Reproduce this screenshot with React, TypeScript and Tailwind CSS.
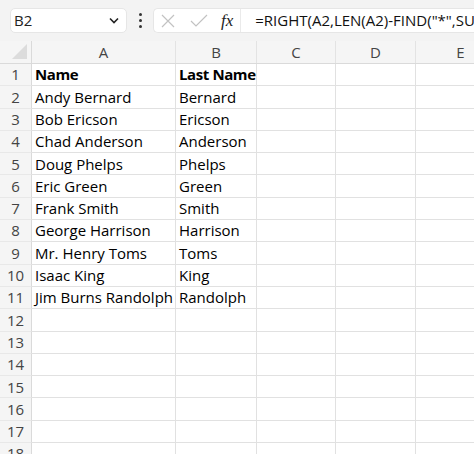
import React from "react";

const data: [string, string][] = [
  ["Name", "Last Name"],
  ["Andy Bernard", "Bernard"],
  ["Bob Ericson", "Ericson"],
  ["Chad Anderson", "Anderson"],
  ["Doug Phelps", "Phelps"],
  ["Eric Green", "Green"],
  ["Frank Smith", "Smith"],
  ["George Harrison", "Harrison"],
  ["Mr. Henry Toms", "Toms"],
  ["Isaac King", "King"],
  ["Jim Burns Randolph", "Randolph"],
];

const rows = Array.from({ length: 18 }, (_, i) => i + 1);

export default function App() {
  return (
    <div
      className="w-[474px] h-[454px] overflow-hidden bg-white text-black"
      style={{ fontFamily: '"Open Sans", "Noto Sans", sans-serif' }}
    >
      {/* Toolbar */}
      <div className="h-[41px] bg-[#f3f3f3] flex items-center pl-[10px] gap-[6px]">
        <div className="w-[117px] h-[25px] bg-white rounded-[5px] border border-[#e6e6e6] flex items-center pl-[3px] pr-[7px] justify-between">
          <span className="text-[15px] text-[#222]">B2</span>
          <svg width="10" height="7" viewBox="0 0 10 7">
            <path d="M1 1.5 L5 5.5 L9 1.5" fill="none" stroke="#222" strokeWidth="1.6" />
          </svg>
        </div>
        <div className="w-[14px] flex flex-col items-center gap-[3px]">
          <div className="w-[3px] h-[3px] rounded-full bg-[#333]" />
          <div className="w-[3px] h-[3px] rounded-full bg-[#333]" />
          <div className="w-[3px] h-[3px] rounded-full bg-[#333]" />
        </div>
        <div className="flex-1 h-[25px] bg-white rounded-l-[5px] border border-r-0 border-[#e6e6e6] flex items-center pl-[6px] overflow-hidden whitespace-nowrap">
          <svg width="16" height="16" viewBox="0 0 16 16" className="shrink-0">
            <path d="M2 2 L14 14 M14 2 L2 14" stroke="#c2c2c2" strokeWidth="1.2" />
          </svg>
          <svg width="18" height="14" viewBox="0 0 18 14" className="ml-[14px] shrink-0">
            <path d="M1 7 L6 12 L17 1" fill="none" stroke="#c2c2c2" strokeWidth="1.2" />
          </svg>
          <span
            className="ml-[13px] text-[17px] italic text-[#222] shrink-0"
            style={{ fontFamily: '"Liberation Serif", serif' }}
          >
            fx
          </span>
          <div className="ml-[7px] w-px h-[25px] bg-[#eaeaea] shrink-0" />
          <span className="ml-[14px] text-[15px] text-[#111]">
            =RIGHT(A2,LEN(A2)-FIND("*",SUBSTITUTE(A2," ","*",LEN(A2)-LEN(SUBSTITUTE(A2," ","")))))
          </span>
        </div>
      </div>

      {/* Column headers */}
      <div className="flex h-[23px] bg-[#f5f5f5] border-b border-[#dadada] text-[15px] text-[#444]">
        <div className="w-[32px] shrink-0 relative border-r border-[#dadada]">
          <svg width="20" height="18" viewBox="0 0 20 18" className="absolute right-[2px] bottom-[2px]">
            <path d="M18 1 L18 16 L3 16 Z" fill="#dcdcdc" />
          </svg>
        </div>
        {[
          ["A", 144],
          ["B", 81],
          ["C", 79],
          ["D", 80],
          ["E", 90],
        ].map(([l, w]) => (
          <div
            key={l as string}
            className="shrink-0 flex items-center justify-center border-r border-[#e3e3e3]"
            style={{ width: w as number }}
          >
            {l}
          </div>
        ))}
      </div>

      {/* Grid */}
      <div className="flex flex-col">
        {rows.map((r) => {
          const d = data[r - 1];
          const bold = r === 1;
          return (
            <div key={r} className="flex h-[22.3px] shrink-0">
              <div className="w-[32px] shrink-0 bg-[#f5f5f5] border-r border-[#dadada] border-b border-b-[#e8e8e8] flex items-center justify-center text-[15px] text-[#444]">
                {r}
              </div>
              <div
                className={`w-[144px] shrink-0 border-r border-b border-[#e1e1e1] flex items-center pl-[3px] whitespace-nowrap text-[15px] ${bold ? "font-bold tracking-[-0.4px]" : ""}`}
              >
                {d ? d[0] : ""}
              </div>
              <div
                className={`w-[81px] shrink-0 border-r border-b border-[#e1e1e1] flex items-center pl-[3px] whitespace-nowrap text-[15px] ${bold ? "font-bold tracking-[-0.4px]" : ""}`}
              >
                {d ? d[1] : ""}
              </div>
              <div className="w-[79px] shrink-0 border-r border-b border-[#e1e1e1]" />
              <div className="w-[80px] shrink-0 border-r border-b border-[#e1e1e1]" />
              <div className="w-[90px] shrink-0 border-r border-b border-[#e1e1e1]" />
            </div>
          );
        })}
      </div>
    </div>
  );
}
